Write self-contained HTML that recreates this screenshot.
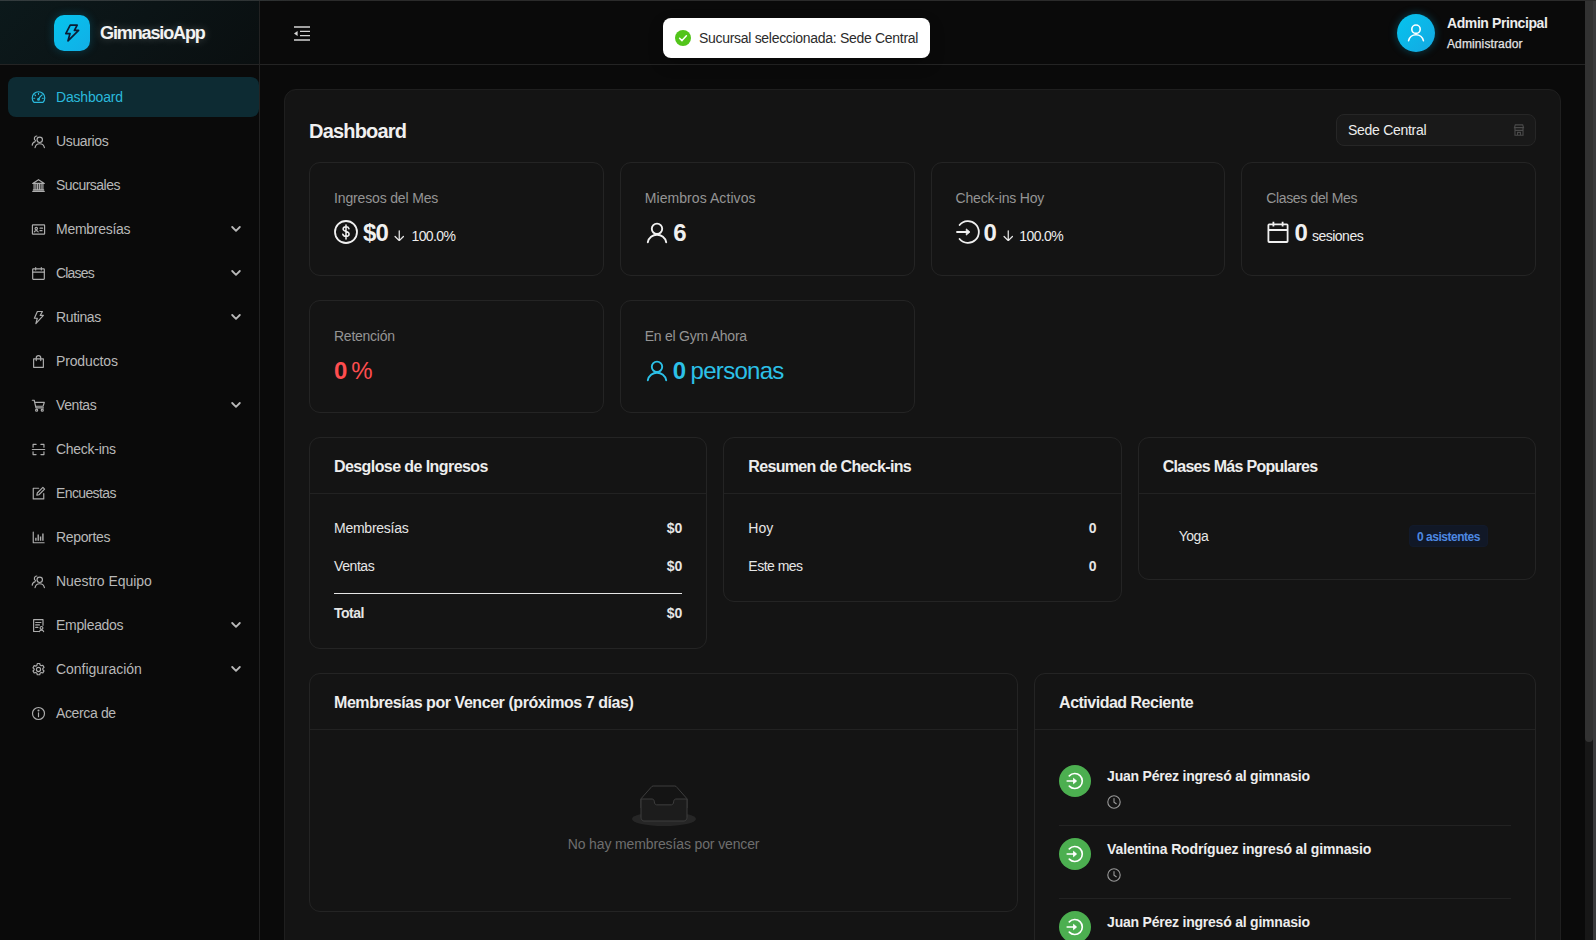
<!DOCTYPE html>
<html lang="es"><head>
<meta charset="utf-8">
<title>GimnasioApp - Dashboard</title>
<style>
*{box-sizing:border-box;margin:0;padding:0}
html,body{width:1596px;height:940px;overflow:hidden;background:#0a0a0a}
body{font-family:"Liberation Sans",sans-serif;font-size:14px;color:#e0e0e0;position:relative}
svg{display:block}
.topline{position:absolute;left:0;top:0;width:1596px;height:1px;background:linear-gradient(90deg,#343c3e 0,#2f3435 255px,#2b2b2b 300px);z-index:50}
/* ---------- sidebar ---------- */
.sider{position:absolute;left:0;top:0;width:260px;height:940px;background:#0a0a0a;border-right:1px solid #222}
.brand{position:absolute;left:0;top:0;width:259px;height:65px;border-bottom:1px solid #242424;
  background:linear-gradient(135deg,#0c191b 0%,#0b1416 50%,#0a0f10 100%)}
.logo{position:absolute;left:54px;top:15px;width:36px;height:36px;border-radius:10px;
  background:linear-gradient(135deg,#05c4ee 0%,#12aee6 100%);box-shadow:0 0 10px rgba(0,180,230,.25)}
.logo svg{position:absolute;left:10px;top:9px}
.brand b{position:absolute;left:100px;top:22px;font-size:18px;line-height:22px;font-weight:700;color:#f2f2f2;letter-spacing:-.55px;text-shadow:0 0 8px rgba(255,255,255,.25)}
.menu{position:absolute;left:0;top:77px;width:259px;list-style:none}
.menu li{position:relative;height:40px;margin:0 0 4px 8px;width:251px;border-radius:8px;color:#b8b8b8;font-size:14px;line-height:40px}
.menu li.on{background:#0d2b33;color:#2ab9dc}
.menu li svg.ic{position:absolute;left:23px;top:12.5px;width:15px;height:15px}
.menu li span{position:absolute;left:48px;top:0;white-space:nowrap}
.menu li:not(.on) svg.ic{color:#adadad}
.menu li svg.ch{position:absolute;left:223px;top:15.5px;width:10px;height:8px}
/* ---------- header ---------- */
.hdr{position:absolute;left:260px;top:0;width:1325px;height:65px;border-bottom:1px solid #242424;background:#0a0a0a}
.fold{position:absolute;left:33px;top:25.5px}
.toast{position:absolute;left:663px;top:18px;width:267px;height:40px;border-radius:8px;background:#fff;color:#2b2b2b;font-size:14px;line-height:40px;z-index:40;
  box-shadow:0 6px 16px rgba(0,0,0,.2)}
.toast svg{position:absolute;left:12px;top:12px}
.toast span{position:absolute;left:36px;top:0;white-space:nowrap}
.user{position:absolute;left:1397px;top:14px;height:38px}
.avatar{position:absolute;left:0;top:0;width:38px;height:38px;border-radius:50%;background:linear-gradient(135deg,#05c4ee,#14a8e2);box-shadow:0 0 8px rgba(0,180,230,.35)}
.avatar svg{position:absolute;left:10px;top:9px}
.user b{position:absolute;left:50px;top:0;font-size:14px;line-height:18px;color:#ededed;white-space:nowrap}
.user i{position:absolute;left:50px;top:22px;font-style:normal;font-size:12px;line-height:16px;color:#e4e4e4;white-space:nowrap;-webkit-text-stroke:.25px #e4e4e4}
/* ---------- scrollbar ---------- */
.sbar{position:absolute;left:1585px;top:1px;width:11px;height:939px;background:#171717;border-right:3px solid #3a3a3c}
.sbar div{position:absolute;left:0;top:0;width:8px;height:741px;background:#323232;border-radius:0 0 4px 4px}
/* ---------- content ---------- */
.main{position:absolute;left:284px;top:89px;width:1277px;height:900px;background:#141414;border:1px solid #1f1f1f;border-radius:12px}
.main h1{position:absolute;left:24px;top:28px;font-size:20px;line-height:26px;font-weight:700;color:#f0f0f0}
.select{position:absolute;left:1051px;top:24px;width:200px;height:32px;border:1px solid #262626;border-radius:8px;background:#191919;color:#ededed;font-size:14px;line-height:30px;padding-left:11px}
.select svg{position:absolute;right:10.5px;top:8.5px}
.card{position:absolute;background:#141414;border:1px solid #242424;border-radius:11px}
.stat .lbl{position:absolute;left:24px;top:25px;font-size:14px;line-height:20px;color:#949494;white-space:nowrap}
.stat .val{position:absolute;left:24px;top:52px;height:36px;display:flex;align-items:center;white-space:nowrap;color:#f0f0f0}
.stat .val b{font-size:24px;line-height:36px;font-weight:700}
.card .hd{height:56px;border-bottom:1px solid #222;padding:0 24px;font-size:16px;line-height:58px;font-weight:700;color:#ededed;white-space:nowrap}
.row{position:absolute;left:24px;right:24px;height:22px;line-height:22px;font-size:14px;color:#e6e6e6}
.row b{position:absolute;right:0;top:0}

.stat .val svg{flex:none}
.pct{font-size:14px;margin:5px 0 0 6px;color:#ededed}
.suf{font-size:14px;margin:5px 0 0 4px;color:#ededed}
.big{font-size:24px;margin-left:4.5px}
.rule{position:absolute;left:24px;right:24px;top:155px;height:1px;background:#e6e6e6}
.tag{position:absolute;right:7px;top:0;height:22px;padding:0 7px;border:1px solid #121a2b;border-radius:4px;background:#111827;color:#4d88e2;font-style:normal;font-size:12px;line-height:22px;font-weight:700}
.empty{position:absolute;left:322px;top:111px}
.emptytx{position:absolute;left:0;width:100%;top:159px;text-align:center;font-size:14px;line-height:22px;color:#6e6e6e}
.item{position:absolute;left:24px;right:24px;height:73px;border-bottom:1px solid #222}
.item .av{position:absolute;left:0;top:12px;width:32px;height:32px;border-radius:50%;background:#4caf50}
.item .av svg{position:absolute;left:7px;top:7px}
.item b{position:absolute;left:48px;top:12px;font-size:14px;line-height:22px;color:#ededed;white-space:nowrap}
.item .clk{position:absolute;left:48px;top:42px}
</style>
</head>
<body>
<div class="topline"></div>

<aside class="sider">
  <div class="brand">
    <div class="logo"><svg width="16" height="18" viewBox="0 0 16 18" fill="none" stroke="#0b1c33" stroke-width="1.700" stroke-linejoin="round"><path d="M6.200 1.200h7L10.400 6.400h4.200L4 16.800l2-7.200H1.800z"></path></svg></div>
    <b style="letter-spacing: -1.12px;">GimnasioApp</b>
  </div>
  <ul class="menu">
    <li class="on"><svg class="ic" viewBox="0 0 16 16" fill="none" stroke="currentColor" stroke-width="1.25" stroke-linecap="round" stroke-linejoin="round"><path d="M3.2 13.2h9.6a6.700 6.700 0 1 0-9.600 0z"></path><path d="M8 9.800l2.300-3.300"></path><circle cx="8" cy="10" r=".9"></circle><path d="M8 3.600v1M4.100 5.200l.7.700M11.900 5.200l-.7.700M2.900 8.800h1M12.100 8.800h1"></path></svg><span style="letter-spacing: -0.18px;">Dashboard</span></li>
    <li><svg class="ic" viewBox="0 0 16 16" fill="none" stroke="currentColor" stroke-width="1.25" stroke-linecap="round" stroke-linejoin="round"><circle cx="9.300" cy="6.200" r="2.900"></circle><path d="M4.300 14.500a5.100 5.100 0 0 1 10 0"></path><path d="M6.300 2.100a2.700 2.700 0 0 0-1.600 4.900M1.300 11.800a4.300 4.300 0 0 1 3.200-3.700"></path></svg><span style="letter-spacing: -0.36px;">Usuarios</span></li>
    <li><svg class="ic" viewBox="0 0 16 16" fill="none" stroke="currentColor" stroke-width="1.25" stroke-linecap="round" stroke-linejoin="round"><path d="M1.800 5.800L8 1.800l6.200 4zM1.800 14.200h12.400M3.300 6v6.500h1.900V6M7.050 6v6.500h1.900V6M10.800 6v6.500h1.900V6M2.500 12.600h11"></path></svg><span style="letter-spacing: -0.54px;">Sucursales</span></li>
    <li><svg class="ic" viewBox="0 0 16 16" fill="none" stroke="currentColor" stroke-width="1.25" stroke-linecap="round" stroke-linejoin="round"><rect x="1.500" y="3" width="13" height="10" rx=".6"></rect><circle cx="5.600" cy="7" r="1.300"></circle><path d="M3.600 10.600a2.100 2.100 0 0 1 4 0M9.600 6.600h2.800M9.600 9.200h2.200"></path></svg><span style="letter-spacing: -0.28px;">Membresías</span><svg class="ch" viewBox="0 0 10 8" fill="none" stroke="currentColor" stroke-width="1.8" stroke-linecap="round" stroke-linejoin="round"><path d="M1.2 2l3.8 3.8L8.800 2"></path></svg></li>
    <li><svg class="ic" viewBox="0 0 16 16" fill="none" stroke="currentColor" stroke-width="1.25" stroke-linecap="round" stroke-linejoin="round"><rect x="1.800" y="3" width="12.400" height="11.200" rx=".6"></rect><path d="M1.800 6.600h12.400M5 1.600v2.600M11 1.600v2.600"></path></svg><span style="letter-spacing: -0.83px;">Clases</span><svg class="ch" viewBox="0 0 10 8" fill="none" stroke="currentColor" stroke-width="1.8" stroke-linecap="round" stroke-linejoin="round"><path d="M1.2 2l3.8 3.8L8.800 2"></path></svg></li>
    <li><svg class="ic" viewBox="0 0 16 16" fill="none" stroke="currentColor" stroke-width="1.25" stroke-linecap="round" stroke-linejoin="round"><path d="M6.800 1.600h5.400L9.800 5.800h3.400L5.200 14.600l1.500-5.800H3.600z"></path></svg><span style="letter-spacing: -0.37px;">Rutinas</span><svg class="ch" viewBox="0 0 10 8" fill="none" stroke="currentColor" stroke-width="1.8" stroke-linecap="round" stroke-linejoin="round"><path d="M1.2 2l3.8 3.8L8.800 2"></path></svg></li>
    <li><svg class="ic" viewBox="0 0 16 16" fill="none" stroke="currentColor" stroke-width="1.25" stroke-linecap="round" stroke-linejoin="round"><path d="M2.800 5.200h10.400v9H2.800zM5.600 7V4.200a2.400 2.400 0 0 1 4.800 0V7"></path></svg><span style="letter-spacing: -0.14px;">Productos</span></li>
    <li><svg class="ic" viewBox="0 0 16 16" fill="none" stroke="currentColor" stroke-width="1.25" stroke-linecap="round" stroke-linejoin="round"><path d="M1.400 2.400h2l1.900 8.200h8M4 4.600h10.200l-1.300 4.200H5"></path><circle cx="6" cy="13" r="1.100"></circle><circle cx="12" cy="13" r="1.100"></circle></svg><span style="letter-spacing: -0.42px;">Ventas</span><svg class="ch" viewBox="0 0 10 8" fill="none" stroke="currentColor" stroke-width="1.8" stroke-linecap="round" stroke-linejoin="round"><path d="M1.2 2l3.8 3.8L8.800 2"></path></svg></li>
    <li><svg class="ic" viewBox="0 0 16 16" fill="none" stroke="currentColor" stroke-width="1.25" stroke-linecap="round" stroke-linejoin="round"><path d="M2.200 5.600V2.600h3.200M10.600 2.600h3.200v3M13.800 10.400v3h-3.200M5.400 13.400H2.200v-3M1.400 8h13.200"></path></svg><span style="letter-spacing: -0.27px;">Check-ins</span></li>
    <li><svg class="ic" viewBox="0 0 16 16" fill="none" stroke="currentColor" stroke-width="1.25" stroke-linecap="round" stroke-linejoin="round"><path d="M13.600 8.200v5.600H2.400V2.400h5.800"></path><path d="M6.200 9.800l.5-2.300 6-6 1.800 1.800-6 6z"></path></svg><span style="letter-spacing: -0.62px;">Encuestas</span></li>
    <li><svg class="ic" viewBox="0 0 16 16" fill="none" stroke="currentColor" stroke-width="1.25" stroke-linecap="round" stroke-linejoin="round"><path d="M2.400 2.200v11.400h11.600"></path><path d="M5.200 11.400V8.200M7.700 11.400V4.800M10.200 11.400V6.800M12.700 11.400V3.600" stroke-width="1.500" stroke-linecap="butt"></path></svg><span style="letter-spacing: -0.34px;">Reportes</span></li>
    <li><svg class="ic" viewBox="0 0 16 16" fill="none" stroke="currentColor" stroke-width="1.25" stroke-linecap="round" stroke-linejoin="round"><circle cx="9.300" cy="6.200" r="2.900"></circle><path d="M4.300 14.500a5.100 5.100 0 0 1 10 0"></path><path d="M6.300 2.100a2.700 2.700 0 0 0-1.600 4.900M1.300 11.800a4.300 4.300 0 0 1 3.200-3.700"></path></svg><span style="letter-spacing: -0.06px;">Nuestro Equipo</span></li>
    <li><svg class="ic" viewBox="0 0 16 16" fill="none" stroke="currentColor" stroke-width="1.25" stroke-linecap="round" stroke-linejoin="round"><path d="M8.200 14.400H2.800V1.800h10v6"></path><path d="M5 4.800h5.600M5 7.400h4M5 10h2.400"></path><circle cx="11.200" cy="10.600" r="1.500"></circle><path d="M8.900 14.600a2.400 2.400 0 0 1 4.600 0"></path></svg><span style="letter-spacing: -0.31px;">Empleados</span><svg class="ch" viewBox="0 0 10 8" fill="none" stroke="currentColor" stroke-width="1.8" stroke-linecap="round" stroke-linejoin="round"><path d="M1.2 2l3.8 3.8L8.800 2"></path></svg></li>
    <li><svg class="ic" viewBox="0 0 16 16" fill="none" stroke="currentColor" stroke-width="1.25" stroke-linecap="round" stroke-linejoin="round"><circle cx="8" cy="8" r="2.200"></circle><path d="M6.700 1.600h2.600l.4 1.700 1.200.7 1.700-.5 1.300 2.200-1.300 1.200v1.400l1.300 1.200-1.300 2.200-1.700-.5-1.200.7-.4 1.700H6.700l-.4-1.700-1.200-.7-1.700.5-1.300-2.200 1.300-1.200V7.300L2.100 6.100l1.300-2.200 1.700.5 1.200-.7z"></path></svg><span style="letter-spacing: -0.04px;">Configuración</span><svg class="ch" viewBox="0 0 10 8" fill="none" stroke="currentColor" stroke-width="1.8" stroke-linecap="round" stroke-linejoin="round"><path d="M1.2 2l3.8 3.8L8.800 2"></path></svg></li>
    <li><svg class="ic" viewBox="0 0 16 16" fill="none" stroke="currentColor" stroke-width="1.25" stroke-linecap="round" stroke-linejoin="round"><circle cx="8" cy="8" r="6.400"></circle><path d="M8 7.200v4.200"></path><circle cx="8" cy="4.800" r=".5" fill="currentColor"></circle></svg><span style="letter-spacing: -0.36px;">Acerca de</span></li>
  </ul>
</aside>

<header class="hdr">
  <svg class="fold" width="18" height="15" viewBox="0 0 18 15" fill="none" stroke="#d4d4d4" stroke-width="1.300"><path d="M1 1h16M7 5.300h10M7 9.700h10M1 14h16"/><path d="M4.600 5v5L1 7.500z" fill="#d4d4d4" stroke="none"/></svg>
</header>

<div class="toast"><svg width="16" height="16" viewBox="0 0 16 16"><circle cx="8" cy="8" r="8" fill="#52c41a"></circle><path d="M4.600 8.200l2.400 2.400 4.400-4.800" fill="none" stroke="#fff" stroke-width="1.500" stroke-linecap="round" stroke-linejoin="round"></path></svg><span style="letter-spacing: -0.3px;">Sucursal seleccionada: Sede Central</span></div>
<div class="user"><div class="avatar"><svg width="18" height="19" viewBox="0 0 18 19" fill="none" stroke="#fff" stroke-width="1.600" stroke-linecap="round"><circle cx="9" cy="6.200" r="4.200"></circle><path d="M1.600 17.600a7.600 7.600 0 0 1 14.800 0"></path></svg></div><b style="letter-spacing: -0.41px;">Admin Principal</b><i style="letter-spacing: 0.12px;">Administrador</i></div>

<main class="main">
  <h1 style="letter-spacing: -0.81px;">Dashboard</h1>
  <div class="select"><span style="letter-spacing: -0.29px;">Sede Central</span><svg width="12" height="12" viewBox="0 0 13 14" fill="none" stroke="#4a4a4a" stroke-width="1.300"><path d="M1.200 4.200L2.200 1h8.600l1 3.200zM1.800 4.400v8.800h9.400V4.400M1.200 7.400h10.600M4.800 13v-3.200h3.400V13"></path></svg></div>

  <section class="card stat" style="left:24px;top:72px;width:294.75px;height:114px">
    <div class="lbl" style="letter-spacing: -0.15px;">Ingresos del Mes</div>
    <div class="val"><svg style="position:relative;top:-1px" width="24" height="24" viewBox="0 0 24 24" fill="none" stroke="#f0f0f0" stroke-width="1.800"><circle cx="12" cy="12" r="11"></circle><path d="M15 8.700c-.4-1.200-1.500-1.900-3-1.900-1.700 0-2.900.9-2.900 2.300 0 3.100 6 1.600 6 4.900 0 1.400-1.300 2.400-3.100 2.400-1.600 0-2.800-.8-3.200-2.100M12 5v14" stroke-width="1.500" stroke-linecap="round"></path></svg><b style="margin-left: 5px; letter-spacing: -0.85px;">$0</b><svg style="margin:5px 0 0 5.5px" width="10.500" height="11.500" viewBox="0 0 10 11" fill="none" stroke="#e8e8e8" stroke-width="1.200" stroke-linecap="round" stroke-linejoin="round"><path d="M5 .8v9M1 6.200l4 4 4-4"></path></svg><span class="pct" style="margin-left:7.5px;letter-spacing: -0.63px;">100.0%</span></div>
  </section>
  <section class="card stat" style="left:334.75px;top:72px;width:294.75px;height:114px">
    <div class="lbl" style="letter-spacing: 0.07px;">Miembros Activos</div>
    <div class="val"><svg width="24" height="24" viewBox="0 0 24 24" fill="none" stroke="#f0f0f0" stroke-width="1.900" stroke-linecap="round"><circle cx="12" cy="7.800" r="5.200"></circle><path d="M2.800 21.200a9.400 9.400 0 0 1 18.400 0"></path></svg><b style="margin-left:4.5px">6</b></div>
  </section>
  <section class="card stat" style="left:645.5px;top:72px;width:294.75px;height:114px">
    <div class="lbl" style="letter-spacing: -0.18px;">Check-ins Hoy</div>
    <div class="val"><svg style="position:relative;top:-1px" width="24" height="24" viewBox="0 0 24 24" fill="none" stroke="#f0f0f0" stroke-width="1.800" stroke-linecap="round" stroke-linejoin="round"><path d="M3.600 5a10.900 10.900 0 1 1 0 14"/><path d="M1 12h11.500"/><path d="M10.600 9.200l3.200 2.800-3.200 2.800z" fill="#f0f0f0" stroke-width="1"/></svg><b style="margin-left:4px">0</b><svg style="margin:5px 0 0 6px" width="10.500" height="11.500" viewBox="0 0 10 11" fill="none" stroke="#e8e8e8" stroke-width="1.200" stroke-linecap="round" stroke-linejoin="round"><path d="M5 .8v9M1 6.200l4 4 4-4"></path></svg><span class="pct" style="letter-spacing: -0.65px;">100.0%</span></div>
  </section>
  <section class="card stat" style="left:956.25px;top:72px;width:294.75px;height:114px">
    <div class="lbl" style="letter-spacing: -0.35px;">Clases del Mes</div>
    <div class="val"><svg style="position:relative;top:-1px" width="24" height="24" viewBox="0 0 24 24" fill="none" stroke="#f0f0f0" stroke-width="1.800" stroke-linejoin="round"><rect x="2.400" y="4.400" width="19.200" height="17.600" rx=".8"></rect><path d="M2.400 10h19.200M7.400 1.800v4.800M16.600 1.800v4.800"></path></svg><b style="margin-left:4.300px">0</b><span class="suf" style="letter-spacing: -0.5px;">sesiones</span></div>
  </section>

  <section class="card stat" style="left:24px;top:210px;width:294.75px;height:113px">
    <div class="lbl" style="top:25px;letter-spacing:-0.25px">Retención</div>
    <div class="val" style="color:#ff4d4f"><b>0</b><b style="margin-left: 4px; font-weight: 400; letter-spacing: -1.34px;">%</b></div>
  </section>
  <section class="card stat" style="left:334.75px;top:210px;width:294.75px;height:113px">
    <div class="lbl" style="top:25px;letter-spacing:-0.25px">En el Gym Ahora</div>
    <div class="val" style="color:#2cc1e8"><svg width="24" height="24" viewBox="0 0 24 24" fill="none" stroke="#2cc1e8" stroke-width="1.900" stroke-linecap="round"><circle cx="12" cy="7.800" r="5.200"></circle><path d="M2.800 21.200a9.400 9.400 0 0 1 18.400 0"></path></svg><b style="margin-left:4px">0</b><span class="big" style="letter-spacing: -0.72px;">personas</span></div>
  </section>

  <section class="card" style="left:24px;top:347px;width:398.330px;height:212px">
    <div class="hd" style="letter-spacing: -0.58px;">Desglose de Ingresos</div>
    <div class="row" style="top:79px"><span style="letter-spacing: -0.25px;">Membresías</span><b>$0</b></div>
    <div class="row" style="top:117px"><span style="letter-spacing: -0.42px;">Ventas</span><b>$0</b></div>
    <div class="rule"></div>
    <div class="row" style="top:164px;font-weight:700"><span style="letter-spacing: -0.48px;">Total</span><b>$0</b></div>
  </section>
  <section class="card" style="left:438.330px;top:347px;width:398.330px;height:165px">
    <div class="hd" style="letter-spacing: -0.67px;">Resumen de Check-ins</div>
    <div class="row" style="top:79px"><span>Hoy</span><b>0</b></div>
    <div class="row" style="top:117px"><span style="letter-spacing: -0.52px;">Este mes</span><b>0</b></div>
  </section>
  <section class="card" style="left:852.670px;top:347px;width:398.330px;height:143px">
    <div class="hd" style="letter-spacing: -0.71px;">Clases Más Populares</div>
    <div class="row" style="top:87px;left:40px;right:40px"><span style="letter-spacing: -0.46px;">Yoga</span><em class="tag" style="letter-spacing: -0.48px;">0 asistentes</em></div>
  </section>

  <section class="card" style="left:24px;top:583px;width:709.080px;height:239px">
    <div class="hd" style="letter-spacing: -0.44px;">Membresías por Vencer (próximos 7 días)</div>
    <svg class="empty" width="64" height="41" viewBox="0 0 64 41"><g transform="translate(0 1)" fill="none"><ellipse fill="#262626" cx="32" cy="33" rx="32" ry="7"></ellipse><g stroke="#3d3d3d"><path d="M55 12.760L44.854 1.258C44.367.474 43.656 0 42.907 0H21.093c-.749 0-1.460.474-1.947 1.257L9 12.761V22h46v-9.240z"></path><path d="M41.613 15.931c0-1.605.994-2.930 2.227-2.931H55v18.137C55 33.260 53.680 35 52.050 35h-40.100C10.320 35 9 33.259 9 31.137V13h11.160c1.233 0 2.227 1.323 2.227 2.928v.022c0 1.605 1.005 2.901 2.237 2.901h14.752c1.232 0 2.237-1.308 2.237-2.913v-.007z" fill="#1c1c1c"></path></g></g></svg>
    <p class="emptytx" style="letter-spacing: -0.13px;">No hay membresías por vencer</p>
  </section>

  <section class="card act" style="left:749.080px;top:583px;width:501.920px;height:420px">
    <div class="hd" style="letter-spacing: -0.5px;">Actividad Reciente</div>
    <div class="item" style="top:79px"><div class="av"><svg width="18" height="18" viewBox="0 0 24 24" fill="none" stroke="#fff" stroke-width="2.200" stroke-linecap="round" stroke-linejoin="round"><path d="M4.400 5.200a10 10 0 1 1 0 13.600"></path><path d="M1.600 12h11"></path><path d="M10.400 8.800l3.600 3.200-3.600 3.200z" fill="#fff" stroke-width="1.200"></path></svg></div><b style="letter-spacing: -0.22px;">Juan Pérez ingresó al gimnasio</b><svg class="clk" width="14" height="14" viewBox="0 0 14 14" fill="none" stroke="#9a9a9a" stroke-width="1.100" stroke-linecap="round"><circle cx="7" cy="7" r="6.200"></circle><path d="M7 3.600v3.600l2.200 1.600"></path></svg></div>
    <div class="item" style="top:152px"><div class="av"><svg width="18" height="18" viewBox="0 0 24 24" fill="none" stroke="#fff" stroke-width="2.200" stroke-linecap="round" stroke-linejoin="round"><path d="M4.400 5.200a10 10 0 1 1 0 13.600"></path><path d="M1.600 12h11"></path><path d="M10.400 8.800l3.600 3.200-3.600 3.200z" fill="#fff" stroke-width="1.200"></path></svg></div><b style="letter-spacing: -0.13px;">Valentina Rodríguez ingresó al gimnasio</b><svg class="clk" width="14" height="14" viewBox="0 0 14 14" fill="none" stroke="#9a9a9a" stroke-width="1.100" stroke-linecap="round"><circle cx="7" cy="7" r="6.200"></circle><path d="M7 3.600v3.600l2.200 1.600"></path></svg></div>
    <div class="item" style="top:225px"><div class="av"><svg width="18" height="18" viewBox="0 0 24 24" fill="none" stroke="#fff" stroke-width="2.200" stroke-linecap="round" stroke-linejoin="round"><path d="M4.400 5.200a10 10 0 1 1 0 13.600"></path><path d="M1.600 12h11"></path><path d="M10.400 8.800l3.600 3.200-3.600 3.200z" fill="#fff" stroke-width="1.200"></path></svg></div><b style="letter-spacing: -0.22px;">Juan Pérez ingresó al gimnasio</b><svg class="clk" width="14" height="14" viewBox="0 0 14 14" fill="none" stroke="#9a9a9a" stroke-width="1.100" stroke-linecap="round"><circle cx="7" cy="7" r="6.200"></circle><path d="M7 3.600v3.600l2.200 1.600"></path></svg></div>
  </section>
</main>

<div class="sbar"><div></div></div>


</body></html>
